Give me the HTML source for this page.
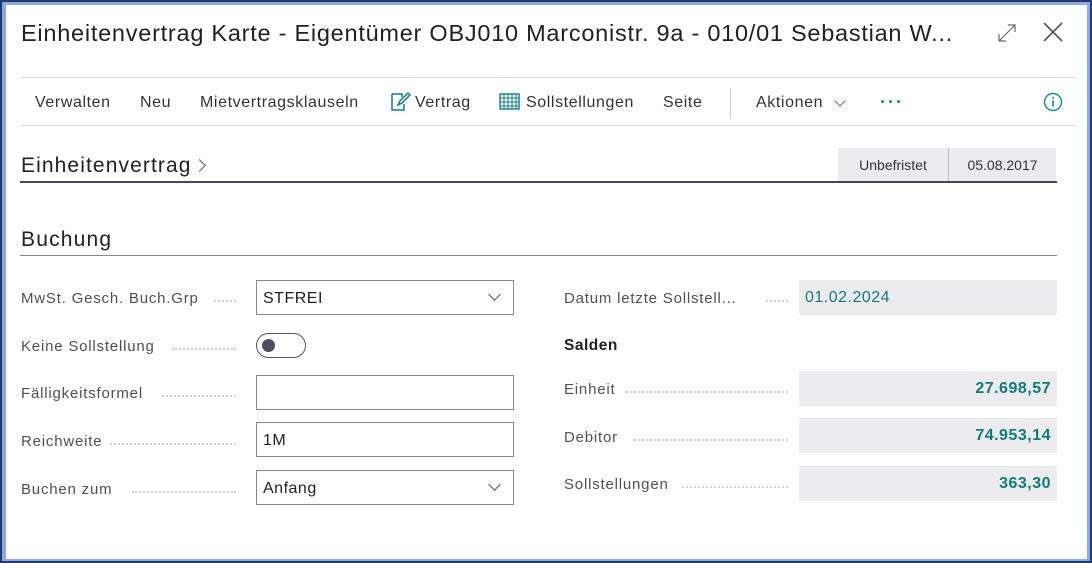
<!DOCTYPE html>
<html><head><meta charset="utf-8"><style>
*{margin:0;padding:0;box-sizing:border-box}
body{width:1092px;height:563px;background:#fff;font-family:"Liberation Sans",sans-serif;color:#212121;position:relative;overflow:hidden}
.frame{position:absolute;left:0;top:0;width:1092px;height:563px;border:2px solid #1f3a6e}
.frame2{position:absolute;left:2px;top:2px;width:1088px;height:559px;border:4px solid #8fa8d8;border-right-width:3px;border-top-width:3px;border-bottom-width:2px}
.a{position:absolute;white-space:nowrap}
.tb{font-size:16px;top:94px;color:#333;letter-spacing:0.6px}
.lbl{font-size:15px;color:#505050;letter-spacing:0.8px}
.dots{position:absolute;border-bottom:2px dotted #d0d0d0;height:1px}
.inp{position:absolute;left:256px;width:258px;height:35px;border:1px solid #8a8a8a;font-size:16px;padding:9px 6px 0;color:#212121;letter-spacing:0.5px}
.ro{position:absolute;left:799px;width:258px;height:35px;background:#ececee;font-size:16px;padding:9px 6px 0;color:#0f7b7b;letter-spacing:0.5px}
.num{text-align:right;font-weight:bold;padding-right:6px}
.chev{position:absolute;right:14px;top:9px;width:9px;height:9px;border-right:1.3px solid #555;border-bottom:1.3px solid #555;transform:rotate(45deg)}
</style></head><body>
<div class="frame"></div><div class="frame2"></div>
<div class="a" style="left:21px;top:20px;font-size:23.5px;color:#212121;letter-spacing:0.75px">Einheitenvertrag Karte - Eigentümer OBJ010 Marconistr. 9a - 010/01 Sebastian W...</div>
<svg class="a" style="left:996px;top:22px" width="22" height="22" viewBox="0 0 22 22"><path d="M3 19L19 3M12 3h7v7M3 12v7h7" stroke="#666" stroke-width="1.2" fill="none"/></svg>
<svg class="a" style="left:1042px;top:21px" width="22" height="22" viewBox="0 0 22 22"><path d="M2 2L20 20M20 2L2 20" stroke="#555" stroke-width="1.6"/></svg>
<div class="a" style="left:20px;top:77px;width:1056px;height:1px;background:#dcdcdc"></div>
<div class="a" style="left:20px;top:125px;width:1056px;height:1px;background:#dcdcdc"></div>
<div class="a tb" style="left:35px">Verwalten</div>
<div class="a tb" style="left:140px">Neu</div>
<div class="a tb" style="left:200px">Mietvertragsklauseln</div>
<svg class="a" style="left:389px;top:92px" width="22" height="20" viewBox="0 0 22 20"><path d="M3 2h10v3M3 2v16h12v-6" stroke="#0f7b8c" stroke-width="1.5" fill="none"/><path d="M9 13l2-4 8-8 2 2-8 8z" stroke="#0f7b8c" stroke-width="1.5" fill="none"/></svg>
<div class="a tb" style="left:415px">Vertrag</div>
<svg class="a" style="left:499px;top:92px" width="22" height="20" viewBox="0 0 22 20"><rect x="1" y="2" width="19" height="15" fill="none" stroke="#0f7b8c" stroke-width="1.4"/><path d="M1 6h19M5 2v15M9 2v15M13 2v15M17 2v15M1 10h19M1 14h19" stroke="#0f7b8c" stroke-width="1"/></svg>
<div class="a tb" style="left:526px">Sollstellungen</div>
<div class="a tb" style="left:663px">Seite</div>
<div class="a" style="left:730px;top:88px;width:1px;height:30px;background:#ccc"></div>
<div class="a tb" style="left:756px">Aktionen</div>
<div class="a" style="left:836px;top:97px;width:8px;height:8px;border-right:1.2px solid #666;border-bottom:1.2px solid #666;transform:rotate(45deg)"></div>
<div class="a" style="left:880px;top:92px;font-size:18px;color:#0f7b8c;letter-spacing:2px;font-weight:bold">···</div>
<svg class="a" style="left:1043px;top:92px" width="20" height="20" viewBox="0 0 20 20"><circle cx="10" cy="10" r="8.5" fill="none" stroke="#0f8c8c" stroke-width="1.4"/><path d="M10 8.5v6" stroke="#0f8c8c" stroke-width="1.6"/><circle cx="10" cy="5.8" r="1" fill="#0f8c8c"/></svg>
<div class="a" style="left:21px;top:154px;font-size:21px;color:#212121;letter-spacing:1.1px">Einheitenvertrag</div>
<div class="a" style="left:195px;top:161px;width:9px;height:9px;border-right:1.3px solid #555;border-top:1.3px solid #555;transform:rotate(45deg)"></div>
<div class="a" style="left:838px;top:148px;width:110px;height:33px;background:#ececee;font-size:14px;padding-top:9px;text-align:center;color:#333">Unbefristet</div>
<div class="a" style="left:948px;top:148px;width:1px;height:33px;background:#bbb"></div>
<div class="a" style="left:949px;top:148px;width:107px;height:33px;background:#ececee;font-size:14px;padding-top:9px;text-align:center;color:#333">05.08.2017</div>
<div class="a" style="left:20px;top:181px;width:1037px;height:2px;background:#3e4a5e"></div>
<div class="a" style="left:21px;top:228px;font-size:21px;color:#212121;letter-spacing:1.2px">Buchung</div>
<div class="a" style="left:20px;top:255px;width:1037px;height:1px;background:#888"></div>

<div class="a lbl" style="left:21px;top:290px">MwSt. Gesch. Buch.Grp</div><div class="dots" style="left:214px;top:300px;width:22px"></div>
<div class="inp" style="top:280px">STFREI<div class="chev"></div></div>
<div class="a lbl" style="left:21px;top:338px">Keine Sollstellung</div><div class="dots" style="left:172px;top:348px;width:64px"></div>
<div class="a" style="left:256px;top:333px;width:50px;height:25px;border:1.3px solid #555;border-radius:13px"><div style="position:absolute;left:5px;top:5px;width:13px;height:13px;border-radius:50%;background:#4a5060"></div></div>
<div class="a lbl" style="left:21px;top:385px">Fälligkeitsformel</div><div class="dots" style="left:162px;top:395px;width:74px"></div>
<div class="inp" style="top:375px"></div>
<div class="a lbl" style="left:21px;top:433px">Reichweite</div><div class="dots" style="left:110px;top:443px;width:126px"></div>
<div class="inp" style="top:422px">1M</div>
<div class="a lbl" style="left:21px;top:481px">Buchen zum</div><div class="dots" style="left:132px;top:491px;width:104px"></div>
<div class="inp" style="top:470px">Anfang<div class="chev"></div></div>

<div class="a lbl" style="left:564px;top:290px">Datum letzte Sollstell...</div><div class="dots" style="left:766px;top:300px;width:22px"></div>
<div class="ro" style="top:280px">01.02.2024</div>
<div class="a" style="left:564px;top:337px;font-size:15.5px;font-weight:bold;color:#212121;letter-spacing:0.5px">Salden</div>
<div class="a lbl" style="left:564px;top:381px">Einheit</div><div class="dots" style="left:626px;top:391px;width:162px"></div>
<div class="ro num" style="top:371px">27.698,57</div>
<div class="a lbl" style="left:564px;top:429px">Debitor</div><div class="dots" style="left:634px;top:439px;width:154px"></div>
<div class="ro num" style="top:418px">74.953,14</div>
<div class="a lbl" style="left:564px;top:476px">Sollstellungen</div><div class="dots" style="left:682px;top:486px;width:106px"></div>
<div class="ro num" style="top:466px">363,30</div>
</body></html>
